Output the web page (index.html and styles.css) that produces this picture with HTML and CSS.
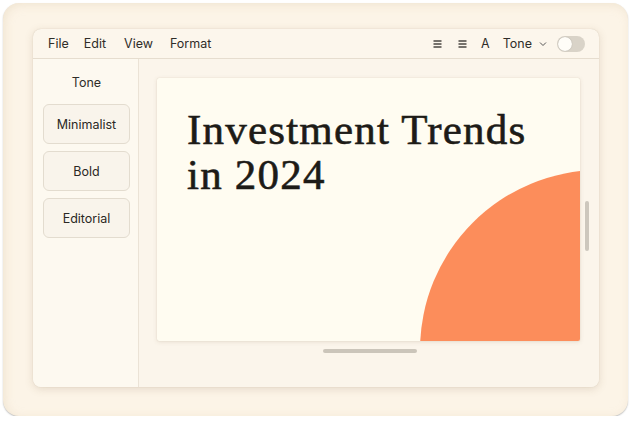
FILE: index.html
```html
<!DOCTYPE html>
<html>
<head>
<meta charset="utf-8">
<link rel="stylesheet" href="styles.css">
</head>
<body>
<div class="frame">
  <div class="window">
    <div class="menubar">
      <div class="menus">
        <span>File</span><span>Edit</span><span>View</span><span>Format</span>
      </div>
      <div class="tools">
        <svg class="ico" width="9" height="8" viewBox="0 0 9 8"><path d="M0.5 1 H8.5 M0.5 4 H8.5 M0.5 7 H8.5" stroke="#4a4741" stroke-width="1.3"/></svg>
        <svg class="ico" width="9" height="8" viewBox="0 0 9 8"><path d="M0.5 1 H8.5 M0.5 4 H8.5 M0.5 7 H8.5" stroke="#4a4741" stroke-width="1.3"/></svg>
        <span class="a">A</span>
        <span class="tone">Tone <svg width="8" height="6" viewBox="0 0 8 6"><path d="M1 1.5 L4 4.5 L7 1.5" fill="none" stroke="#555" stroke-width="1"/></svg></span>
        <span class="toggle"><span class="knob"></span></span>
      </div>
    </div>
    <div class="body">
      <aside class="sidebar">
        <div class="side-title">Tone</div>
        <button class="opt">Minimalist</button>
        <button class="opt">Bold</button>
        <button class="opt">Editorial</button>
      </aside>
      <main class="canvas">
        <div class="slide">
          <h1>Investment Trends<br>in 2024</h1>
          <div class="circle"></div>
        </div>
        <div class="vscroll"></div>
        <div class="hscroll"></div>
      </main>
    </div>
  </div>
</div>
</body>
</html>
```
FILE: styles.css
```css
html, body { margin: 0; padding: 0; background: #ffffff; }
body { font-family: Inter, "Noto Sans", sans-serif; color: #2b2925; }
.frame {
  margin: 3px 0 0 3px;
  width: 625px; height: 413px;
  box-sizing: border-box;
  padding: 26px 29px 29px 30px;
  border-radius: 16px;
  background: #fcf4e7;
  box-shadow: 0 1px 1.5px rgba(0,0,0,0.25), inset 2px 2px 10px rgba(220,200,170,0.35);
}
.window {
  width: 566px; height: 358px;
  border-radius: 8px;
  background: #fcf6ec;
  box-shadow: 0 2px 8px rgba(120,95,60,0.18), 0 0 1px rgba(120,95,60,0.3);
  display: flex; flex-direction: column;
  overflow: hidden;
}
.menubar {
  height: 30px; flex: none;
  box-sizing: border-box;
  border-bottom: 1px solid #e6ddcf;
  display: flex; align-items: center; justify-content: space-between;
  padding: 0 14px 0 15px;
  font-size: 12.5px; color: #2f2d29;
}
.menus { display: flex; }
.menus span:nth-child(1) { margin-right: 15px; }
.menus span:nth-child(2) { margin-right: 18px; }
.menus span:nth-child(3) { margin-right: 17px; }
.tools { display: flex; align-items: center; }
.ico { display: block; margin-right: 16px; }
.a { font-size: 12.5px; margin-right: 13px; color: #2f2d29; margin-left: -2px; }
.tone { display: flex; align-items: center; gap: 7px; margin-right: 10px; }
.tone svg { margin-top: 1px; }
.toggle {
  width: 28px; height: 16px; border-radius: 8px;
  background: #d9d3c8; position: relative; display: block;
}
.knob {
  position: absolute; left: 1px; top: 1px;
  width: 14px; height: 14px; border-radius: 50%;
  background: #fffdf8; box-shadow: 0 0 1px rgba(0,0,0,0.3);
}
.body { flex: 1; display: flex; min-height: 0; }
.sidebar {
  width: 106px; flex: none;
  box-sizing: border-box;
  border-right: 1px solid #ebe3d6;
  background: #fdf9f0;
  padding: 16px 8px 0 10px;
  display: flex; flex-direction: column; gap: 7px;
}
.side-title { text-align: center; font-size: 12.5px; color: #2f2d29; margin-bottom: 7px; }
.opt {
  height: 40px;
  border: 1px solid #e3dccf;
  border-radius: 6px;
  background: #f9f4eb;
  font-family: Inter, "Noto Sans", sans-serif;
  font-size: 12.5px; color: #2a2824;
}
.canvas {
  flex: 1; position: relative;
  background: #fbf5eb;
  padding: 19px 0 0 18px;
}
.slide {
  width: 423px; height: 263px;
  background: #fffcf1;
  border-radius: 2px;
  box-shadow: 0 1px 4px rgba(120,95,60,0.15), 0 0 1px rgba(120,95,60,0.25);
  position: relative; overflow: hidden;
  box-sizing: border-box;
  padding: 29px 0 0 30px;
}
.slide h1 {
  margin: 0;
  font-family: "Liberation Serif", serif;
  font-weight: normal;
  font-size: 43px;
  letter-spacing: 1.2px;
  -webkit-text-stroke: 0.6px #1d1b17;
  line-height: 45px;
  color: #1d1b17;
  position: relative; z-index: 1;
}
.circle {
  position: absolute;
  left: 263px; top: 92px;
  width: 360px; height: 360px;
  border-radius: 50%;
  background: #fc8d5b;
}
.vscroll {
  position: absolute; left: 446px; top: 142px;
  width: 4px; height: 50px; border-radius: 2px;
  background: #cdc7bd;
}
.hscroll {
  position: absolute; left: 184px; top: 290px;
  width: 94px; height: 4px; border-radius: 2px;
  background: #cbc5ba;
}
```
